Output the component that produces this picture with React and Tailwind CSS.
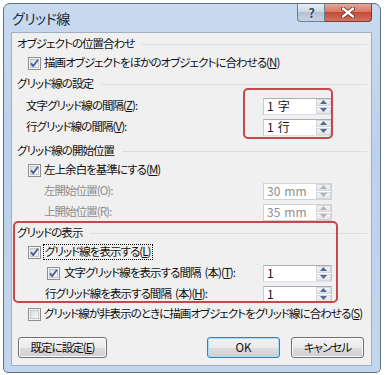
import React from "react";

const font = "[font-family:'Noto_Sans_CJK_JP','Noto_Sans',sans-serif]";

const Key = ({ k }) => (
  <>
    (<span className="underline underline-offset-1">{k}</span>)
  </>
);

const CheckBox = ({ checked = true }) => (
  <svg width="13" height="13" viewBox="0 0 13 13" className="shrink-0">
    <defs>
      <linearGradient id="cbg" x1="0" y1="0" x2="1" y2="1">
        <stop offset="0" stopColor="#d8dbe0" />
        <stop offset="1" stopColor="#fbfbfb" />
      </linearGradient>
    </defs>
    <rect x="0.5" y="0.5" width="12" height="12" fill="#f4f4f4" stroke="#8e8f8f" />
    <rect x="2.5" y="2.5" width="8" height="8" fill="url(#cbg)" stroke="#c4c8ce" />
    {checked && (
      <path d="M3 6.4 L5.3 9 L10 2.8" fill="none" stroke="#4a5f97" strokeWidth="1.9" strokeLinejoin="round" />
    )}
  </svg>
);

const Header = ({ children }) => (
  <div className="flex h-[18px] items-center">
    <span className="whitespace-nowrap">{children}</span>
    <div className="ml-2 mr-[3px] h-px flex-1 bg-[#d5dfe5]" />
  </div>
);

const Arrow = ({ up, disabled }) => (
  <div className="flex h-[7px] items-center justify-center border border-[#d3d6db] bg-[linear-gradient(#f3f4f6,#e2e5ea)]">
    <svg width="7" height="4" viewBox="0 0 7 4">
      <path d={up ? "M0 4 L3.5 0 L7 4 Z" : "M0 0 L3.5 4 L7 0 Z"} fill={disabled ? "#b3b3b3" : "#4d6a9a"} />
    </svg>
  </div>
);

const Spin = ({ value, unit, disabled }) => (
  <div
    className={`flex h-[17px] w-[69px] items-stretch border bg-white ${
      disabled ? "border-[#cfd1d5] text-[#8d8d8d]" : "border-[#abadb3] border-b-[#dde1e7] border-l-[#c9ccd3] border-r-[#c9ccd3]"
    }`}
  >
    <div className="flex flex-1 items-center gap-[4px] pl-[3px] text-[12px] leading-none tracking-normal">
      <span>{value}</span>
      {unit && <span>{unit}</span>}
    </div>
    <div className="flex w-[15px] flex-col justify-center gap-[1px]">
      <Arrow up disabled={disabled} />
      <Arrow disabled={disabled} />
    </div>
  </div>
);

const Button = ({ children, primary, className = "" }) => (
  <button
    className={`flex h-[21px] items-center justify-center rounded-[3px] border text-[11.5px] leading-none bg-[linear-gradient(#f2f2f2_0%,#ebebeb_50%,#dddddd_50%,#cfcfcf_100%)] ${
      primary ? "border-[#3c7fb1] shadow-[inset_0_0_0_1px_#a9dcf7]" : "border-[#707070] shadow-[inset_0_0_0_1px_#fcfcfc]"
    } ${className}`}
  >
    {children}
  </button>
);

const Label = ({ children, className = "" }) => <span className={`whitespace-nowrap ${className}`}>{children}</span>;

export default function App() {
  return (
    <div className={`h-[375px] w-[385px] bg-white pl-[3px] pt-[3px] text-[11.5px] tracking-[-0.95px] text-[#111] ${font} [font-feature-settings:'palt']`}>
      <div className="flex h-[370px] w-[378px] flex-col rounded-b-[5px] rounded-t-[7px] border border-[#5f7186] bg-[linear-gradient(#c7daf0,#bcd1ea_40%,#c2d6ee)] pb-[6px] pl-[7px] pr-[8px]">
        {/* title bar */}
        <div className="flex h-[28px] items-start">
          <div className="pl-[1px] pt-[4px] text-[14px] leading-[20px] tracking-[-0.5px] text-[#1b2a3c]">グリッド線</div>
          <div className="ml-auto flex">
            <div className="flex h-[18px] w-[28px] items-center justify-center rounded-bl-[4px] border border-t-0 border-[#6d7f95] bg-[linear-gradient(#e6edf5,#c9d5e2_50%,#b3c2d4_50%,#c5d3e2)] text-[13px] font-bold leading-none text-[#3d4a5a] [text-shadow:0_0_2px_#fff]">
              ?
            </div>
            <div className="flex h-[18px] w-[47px] items-center justify-center rounded-br-[4px] border border-l-0 border-t-0 border-[#7a3a32] bg-[linear-gradient(#e9a899,#d7705e_50%,#c44a35_50%,#d2735f)]">
              <svg width="14" height="11" viewBox="0 0 14 11">
                <path d="M2 1.5 L12 9.5 M12 1.5 L2 9.5" stroke="#5a2a22" strokeWidth="4" strokeLinecap="round" />
                <path d="M2 1.5 L12 9.5 M12 1.5 L2 9.5" stroke="#fff" strokeWidth="2.4" strokeLinecap="round" />
              </svg>
            </div>
          </div>
        </div>

        {/* client area */}
        <div className="relative flex flex-1 flex-col border border-[#9fb0c5] bg-[#f0f0f0] pl-[5px] pr-[1px] pt-[1px] leading-none">
          <div className="mt-[1px]">
            <Header>オブジェクトの位置合わせ</Header>
          </div>
          <div className="mt-[1px] flex h-[18px] items-center gap-[3px] pl-[11px]">
            <CheckBox />
            <Label>
              描画オブジェクトをほかのオブジェクトに合わせる<Key k="N" />
            </Label>
          </div>

          <div className="mt-[3px]">
            <Header>グリッド線の設定</Header>
          </div>
          <div className="mt-[4px] flex h-[18px] items-center pl-[9px]">
            <Label>
              文字グリッド線の間隔<Key k="Z" />:
            </Label>
            <div className="ml-auto mr-[38px]">
              <Spin value="1" unit="字" />
            </div>
          </div>
          <div className="mt-[3px] flex h-[18px] items-center pl-[9px]">
            <Label>
              行グリッド線の間隔<Key k="V" />:
            </Label>
            <div className="ml-auto mr-[38px]">
              <Spin value="1" unit="行" />
            </div>
          </div>

          <div className="mt-[6px]">
            <Header>グリッド線の開始位置</Header>
          </div>
          <div className="mt-[1px] flex h-[18px] items-center gap-[3px] pl-[11px]">
            <CheckBox />
            <Label>
              左上余白を基準にする<Key k="M" />
            </Label>
          </div>
          <div className="mt-[3px] flex h-[18px] items-center pl-[27px] text-[#8d8d8d]">
            <Label>左開始位置(O):</Label>
            <div className="ml-auto mr-[38px]">
              <Spin value="30" unit="mm" disabled />
            </div>
          </div>
          <div className="mt-[3px] flex h-[18px] items-center pl-[27px] text-[#8d8d8d]">
            <Label>上開始位置(R):</Label>
            <div className="ml-auto mr-[38px]">
              <Spin value="35" unit="mm" disabled />
            </div>
          </div>

          <div className="mt-[3px]">
            <Header>グリッドの表示</Header>
          </div>
          <div className="mt-[1px] flex h-[18px] items-center gap-[2px] pl-[11px]">
            <CheckBox />
            <Label className="border border-dotted border-black px-[1px] py-[1px]">
              グリッド線を表示する<Key k="L" />
            </Label>
          </div>
          <div className="mt-[3px] flex h-[18px] items-center gap-[4px] pl-[30px]">
            <CheckBox />
            <Label>
              文字グリッド線を表示する間隔<span className="ml-[4px]">(本)</span>
              <Key k="T" />:
            </Label>
            <div className="ml-auto mr-[38px]">
              <Spin value="1" />
            </div>
          </div>
          <div className="mt-[3px] flex h-[18px] items-center pl-[28px]">
            <Label>
              行グリッド線を表示する間隔<span className="ml-[4px]">(本)</span>
              <Key k="H" />:
            </Label>
            <div className="ml-auto mr-[38px]">
              <Spin value="1" />
            </div>
          </div>
          <div className="mt-[2px] flex h-[18px] items-center gap-[3px] pl-[11px]">
            <CheckBox checked={false} />
            <Label>
              グリッド線が非表示のときに描画オブジェクトをグリッド線に合わせる<Key k="S" />
            </Label>
          </div>

          <div className="mt-[14px] flex items-center pl-[1px] pr-[6px]">
            <Button className="w-[89px]">
              既定に設定<Key k="E" />
            </Button>
            <Button primary className="ml-auto w-[73px] tracking-normal">
              OK
            </Button>
            <Button className="ml-[11px] w-[73px]">キャンセル</Button>
          </div>

          {/* annotation boxes */}
          <div className="pointer-events-none absolute left-[231px] top-[55px] h-[51px] w-[90px] rounded-[5px] border-2 border-[#c4494a]" />
          <div className="pointer-events-none absolute left-[1px] top-[188px] h-[82px] w-[325px] rounded-[5px] border-2 border-[#c4494a]" />
        </div>
      </div>
    </div>
  );
}
